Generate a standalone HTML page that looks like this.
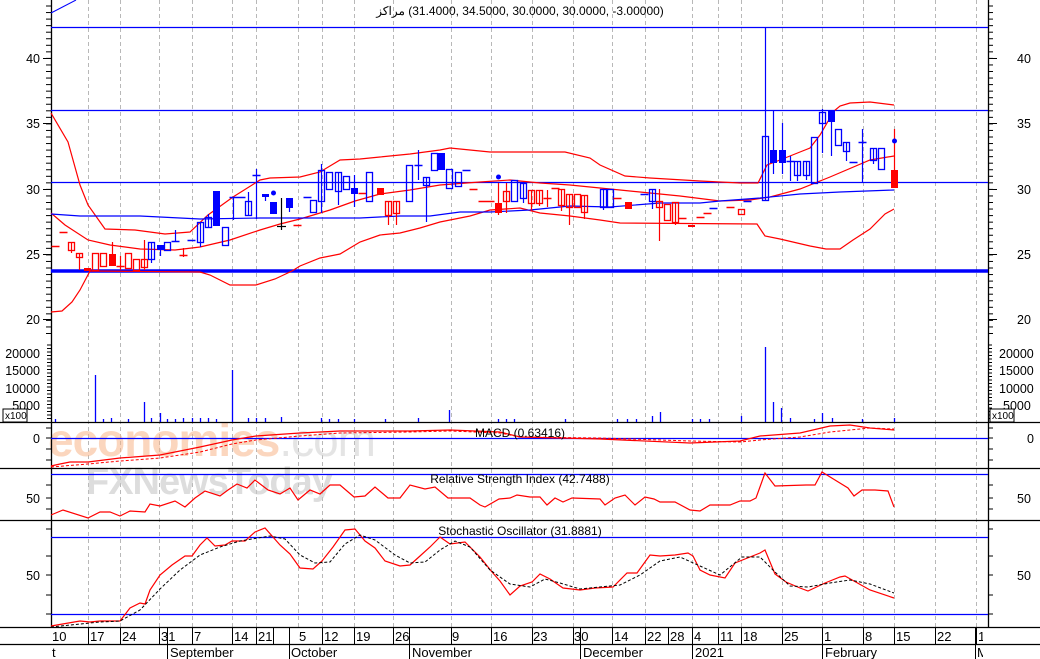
<!DOCTYPE html>
<html><head><meta charset="utf-8"><style>
html,body{margin:0;padding:0;background:#fff;}
body{width:1040px;height:659px;overflow:hidden;}
svg{display:block;font-family:"Liberation Sans","Noto Sans CJK SC",sans-serif;}
</style></head><body>
<svg id="s" width="1040" height="659" viewBox="0 0 1040 659" xmlns="http://www.w3.org/2000/svg">
<defs><clipPath id="cl"><rect x="0" y="0" width="983" height="659"/></clipPath></defs>
<g id="grid"></g>
<text x="48" y="456" font-size="46" fill="#f8b58a" opacity="0.55" font-weight="bold" letter-spacing="-1">economies<tspan fill="#cfcfcf" font-weight="normal">.com</tspan></text>
<text x="86" y="494" font-size="38" fill="#c8c8c8" opacity="0.6" font-weight="bold" letter-spacing="-1">FXNewsToday</text>
<g id="draw"></g>
<g font-size="12.5" fill="#000">
<text x="520" y="15" text-anchor="middle" font-size="12" direction="ltr" unicode-bidi="embed">&#x200E;مراكز&#x200E; (31.4000, 34.5000, 30.0000, 30.0000, -3.00000)</text>
<text x="40" y="63" text-anchor="end">40</text><text x="40" y="128" text-anchor="end">35</text><text x="40" y="194" text-anchor="end">30</text><text x="40" y="259" text-anchor="end">25</text><text x="40" y="324" text-anchor="end">20</text>
<text x="1017" y="63">40</text><text x="1017" y="128">35</text><text x="1017" y="194">30</text><text x="1017" y="259">25</text><text x="1017" y="324">20</text>
<text x="40" y="358" text-anchor="end">20000</text><text x="40" y="375" text-anchor="end">15000</text><text x="40" y="393" text-anchor="end">10000</text><text x="40" y="410" text-anchor="end">5000</text>
<text x="999" y="358">20000</text><text x="999" y="375">15000</text><text x="999" y="393">10000</text><text x="1003" y="410">5000</text>
<text x="40" y="443" text-anchor="end">0</text><text x="1027" y="443">0</text>
<text x="40" y="503" text-anchor="end">50</text><text x="1017" y="503">50</text>
<text x="40" y="580" text-anchor="end">50</text><text x="1017" y="580">50</text>
<text x="520" y="437" text-anchor="middle" font-size="12">MACD (0.63416)</text>
<text x="520" y="483" text-anchor="middle" font-size="12">Relative Strength Index (42.7488)</text>
<text x="520" y="535" text-anchor="middle" font-size="12">Stochastic Oscillator (31.8881)</text>
</g>
<g font-size="10" fill="#000"><rect x="3" y="409" width="24" height="13" fill="#fff" stroke="#000"/><text x="5" y="419">x100</text>
<rect x="990" y="409" width="24" height="13" fill="#fff" stroke="#000"/><text x="992" y="419">x100</text></g>
<g font-size="13" fill="#000" id="axl" clip-path="url(#cl)">
<text x="52" y="641">10</text><text x="90" y="641">17</text><text x="122" y="641">24</text><text x="161" y="641">31</text><text x="194" y="641">7</text><text x="234" y="641">14</text><text x="258" y="641">21</text><text x="299" y="641">5</text><text x="324" y="641">12</text><text x="356" y="641">19</text><text x="395" y="641">26</text><text x="452" y="641">9</text><text x="493" y="641">16</text><text x="533" y="641">23</text><text x="574" y="641">30</text><text x="614" y="641">14</text><text x="647" y="641">22</text><text x="670" y="641">28</text><text x="694" y="641">4</text><text x="720" y="641">11</text><text x="743" y="641">18</text><text x="784" y="641">25</text><text x="824" y="641">1</text><text x="865" y="641">8</text><text x="896" y="641">15</text><text x="937" y="641">22</text><text x="978" y="641">1</text>
<text x="52" y="657">t</text><text x="170" y="657">September</text><text x="291" y="657">October</text><text x="412" y="657">November</text><text x="583" y="657">December</text><text x="695" y="657">2021</text><text x="825" y="657">February</text><text x="977" y="657">Ma</text>
</g>
</svg>
<script>
var NS="http://www.w3.org/2000/svg",G=document.getElementById('grid'),D=document.getElementById('draw');
function el(p,t,a){var e=document.createElementNS(NS,t);for(var k in a)e.setAttribute(k,a[k]);p.appendChild(e);return e;}
function line(p,x1,y1,x2,y2,c,w,da){var a={x1:x1,y1:y1,x2:x2,y2:y2,stroke:c,'stroke-width':w||1};if(da)a['stroke-dasharray']=da;return el(p,'line',a);}
function pl(p,pts,c,w,da){var a={points:pts.map(function(q){return q.join(',')}).join(' '),fill:'none',stroke:c,'stroke-width':w||1};if(da)a['stroke-dasharray']=da;el(p,'polyline',a);}
var gx=[88,120,159,192,232,256,298,322,354,393,451,491,532,573,612,645,692,718,741,782,822,863,894,935,976];
gx.forEach(function(x){line(G,x+.5,0,x+.5,627,'#b8b8b8',1,'4,3');});
[422.5,468.5,520.5,627.5,644.5].forEach(function(y){line(D,0,y,1040,y,'#000',1.3);});
line(D,51.5,0,51.5,627,'#000',1.3);line(D,988.5,0,988.5,627,'#000',1.3);
for(var y=6;y<340;y+=6.55){line(D,46,y,51,y,'#000',1);line(D,988,y,993,y,'#000',1);}
[58,123,189,254,319].forEach(function(y){line(D,43,y+.5,51,y+.5,'#000',1);line(D,988,y+.5,997,y+.5,'#000',1);});
for(var y=345;y<422;y+=3.5){line(D,47,y,51,y,'#000',1);line(D,988,y,992,y,'#000',1);}
[428,438,449,460,485,498,509,529,556,575,595,614].forEach(function(y){line(D,46,y,51,y,'#000',1);line(D,988,y,993,y,'#000',1);});
[88,120,159,192,232,256,273,289,322,354,393,409,451,491,532,573,612,645,668,692,718,741,782,822,863,894,935,976].forEach(function(x){line(D,x+.5,627,x+.5,644,'#000',1);});
[167,289,409,580,692,822,975].forEach(function(x){line(D,x+.5,627,x+.5,659,'#000',1);});
var B='#0000ff',R='#ff0000';
line(D,51,27.5,988,27.5,B,1.2);line(D,51,110.5,988,110.5,B,1.2);line(D,51,182.5,988,182.5,B,1.2);line(D,51,271,988,271,B,3.5);
line(D,51,13,76,0,B,1);
line(D,51,438.5,988,438.5,B,1.2);line(D,51,474.5,988,474.5,B,1.2);line(D,51,537.5,988,537.5,B,1.2);line(D,51,614.5,988,614.5,B,1.2);
pl(D,[[51,113],[68,142],[80,185],[88,205],[105,229],[135,230],[165,234],[190,232],[208,215],[233,197],[260,180],[270,178],[300,177],[320,172],[340,160],[360,159],[380,157],[410,154],[440,150],[450,148],[490,152],[565,152],[590,158],[600,165],[625,176],[650,178],[700,181],[740,183],[758,183],[767,165],[780,160],[800,152],[810,148],[820,135],[834,111],[840,106],[850,103],[870,102],[894,105]],R,1.2);
pl(D,[[51,213],[65,225],[88,240],[110,245],[140,249],[175,250],[200,247],[230,240],[260,230],[280,224],[300,219],[330,210],[355,201],[380,194],[410,190],[440,185],[480,182],[510,180],[540,183],[570,185],[600,188],[620,190],[680,196],[720,201],[750,200],[770,197],[800,189],[830,177],[870,160],[894,156]],R,1.2);
pl(D,[[51,312],[62,311],[72,302],[80,290],[90,271],[200,272],[210,275],[230,285],[256,285],[275,279],[292,271],[300,266],[320,258],[340,254],[360,242],[380,235],[400,233],[420,228],[440,222],[470,216],[490,210],[520,208],[540,213],[570,216],[600,220],[620,223],[757,224],[765,236],[780,239],[810,246],[826,249],[840,249],[853,240],[870,229],[885,214],[894,209]],R,1.2);
pl(D,[[51,214],[80,216],[140,216],[200,219],[260,218],[360,218],[400,216],[430,216],[460,212],[490,212],[530,210],[570,206],[610,207],[660,203],[700,203],[720,201],[760,198],[800,194],[840,192],[894,190]],B,1.2);
var C=[[55,246,246,246,246,R,2],[63,232,232,232,232,R,2],[71,242,250,242,253,R,0],[79,253,257,253,270,R,0],[87,268,271,268,271,R,1],[95,253,270,253,270,R,0],[103,253,266,253,266,R,0],[112,254,266,242,266,R,1],[120,266,266,256,270,R,2],[128,253,268,253,268,R,0],[136,259,270,259,270,R,0],[144,259,267,240,270,R,0],
[151,242,259,242,263,B,0],[160,245,250,245,256,B,1],[167,242,250,242,250,B,0],[175,241,241,230,242,B,2],[183,255,255,248,257,R,2],[191,240,240,240,240,B,2],[200,222,242,222,247,B,0],[208,217,227,214,227,B,0],[216,191,226,191,226,B,1],[225,227,245,227,245,B,0],[233,197,197,197,220,B,2],[241,197,197,197,197,B,2],[248,201,215,192,215,B,0],[256,175,175,169,219,B,2],[265,194,197,194,201,B,1],[273,202,214,202,214,B,1],[289,198,208,198,212,B,1],[297,225,225,225,225,R,2],[307,197,197,197,197,B,2],[313,200,212,200,212,B,0],[321,170,201,164,213,B,0],[329,172,189,172,189,B,0],[338,172,191,172,205,B,0],[346,176,189,176,189,B,0],[354,188,194,175,207,B,1],[362,193,193,193,193,R,2],[369,172,201,172,201,B,0],[380,188,195,188,195,R,1],[388,201,215,201,225,R,0],[396,201,213,201,225,R,0],[409,165,201,165,201,B,0],[418,165,165,150,180,B,2],[426,177,185,177,222,B,0],[434,153,170,153,170,B,0],[441,153,170,153,170,B,1],[449,169,188,169,188,B,0],[458,172,186,172,186,B,0],[466,170,170,170,170,B,2],[473,189,189,189,189,R,2],[482,201,201,201,201,R,2],[490,201,201,201,201,R,2],[498,203,213,183,215,R,1],[506,191,201,183,213,R,0],[514,180,201,180,201,B,0],
[523,183,198,183,203,B,0],[531,190,203,190,211,R,0],[539,190,203,190,206,R,0],[547,198,198,190,207,R,2],[555,188,188,188,188,R,2],[561,189,205,189,211,R,0],[569,194,207,194,225,R,0],[577,194,207,194,207,R,0],[584,195,212,195,219,R,0],[603,189,207,189,210,B,0],[610,189,207,189,207,B,0],[617,198,198,198,198,R,2],[628,202,209,202,209,R,1],[644,194,194,194,194,B,2],[652,189,201,189,209,B,0],[659,201,207,189,241,R,0],[667,204,220,204,220,R,0],[675,202,222,202,225,R,0],[682,218,218,218,218,R,2],[691,225,226,225,226,R,1],[700,217,217,217,217,R,2],[707,213,213,213,213,R,2],[713,208,208,208,208,B,2],[730,207,207,207,207,R,2],[741,209,214,209,214,R,0],[747,201,201,201,201,B,2],
[765,136,200,27,200,B,0],[773,150,163,110,174,B,1],[782,150,163,123,174,B,1],[790,161,161,156,181,B,2],[797,161,175,161,181,B,0],[806,161,175,161,180,B,0],[814,137,183,137,183,B,0],[822,112,123,109,153,B,0],[831,110,122,110,156,B,1],[838,129,145,129,145,B,0],[846,142,151,142,161,B,0],[853,162,162,162,162,B,2],[862,142,142,129,182,B,2],[873,148,160,148,164,B,0],[881,148,169,148,169,B,0],[894,170,188,129,188,R,1]];
C.forEach(function(c){var x=c[0],col=c[5];
 if(c[3]<c[1]||c[4]>c[2])line(D,x+.5,c[3],x+.5,c[4],col,1.2);
 if(c[6]==2){line(D,x-3.5,c[1]+.5,x+4.5,c[1]+.5,col,1.5);}
 else if(c[6]==1){el(D,'rect',{x:x-3,y:c[1],width:7,height:Math.max(2,c[2]-c[1]),fill:col});}
 else{el(D,'rect',{x:x-2.5,y:c[1]+.5,width:6,height:c[2]-c[1],fill:'none',stroke:col,'stroke-width':1.3});}
});
line(D,281.5,198,281.5,230,'#000',1.2);line(D,277,226.5,286,226.5,'#000',1.2);
el(D,'circle',{cx:273.5,cy:193,r:2.5,fill:B});el(D,'circle',{cx:498.5,cy:177,r:2.5,fill:B});el(D,'circle',{cx:894.5,cy:141,r:2.5,fill:B});
var V=[[95,375],[144,402],[160,413],[232,370],[449,410],[765,347],[773,402],[781,408],[822,413],[55,419],[103,419],[111,418],[128,419],[151,418],[167,419],[175,419],[183,418],[192,418],[200,418],[208,418],[216,419],[248,418],[256,418],[265,418],[281,417],[321,418],[329,419],[338,419],[354,419],[385,419],[418,418],[498,419],[506,419],[514,419],[565,419],[617,419],[627,419],[636,419],[652,416],[660,412],[692,419],[700,419],[709,419],[741,416],[790,418],[814,419],[832,418],[862,419],[894,418]];
V.forEach(function(v){line(D,v[0]+.5,v[1],v[0]+.5,422,B,1.3);});
pl(D,[[51,466],[60,464],[70,462],[88,462],[120,458],[160,455],[200,447],[232,440],[256,436],[300,433],[340,431],[410,431],[450,430],[500,432],[520,437],[600,439],[690,443],[740,441],[760,436],[800,433],[830,426],[850,425],[870,428],[894,430]],R,1.2);
pl(D,[[51,467],[88,464],[120,461],[160,458],[200,452],[232,444],[256,440],[300,436],[340,433],[410,432],[450,431],[500,433],[520,437],[600,438],[690,441],[740,442],[760,440],[800,437],[830,432],[850,430],[870,428],[894,429]],R,1,'3,2');
pl(D,[[51,515],[63,510],[88,518],[100,512],[110,512],[120,516],[130,511],[145,512],[150,504],[160,506],[175,501],[185,507],[195,498],[205,491],[220,496],[228,490],[237,484],[247,488],[255,480],[268,490],[280,494],[290,488],[298,500],[310,490],[320,494],[330,485],[340,485],[354,497],[365,496],[375,487],[388,498],[400,498],[410,485],[425,489],[435,487],[448,498],[470,498],[480,505],[485,507],[499,499],[510,498],[517,495],[530,497],[540,497],[547,505],[555,498],[563,502],[572,498],[600,499],[605,505],[615,498],[625,495],[635,505],[645,497],[654,499],[660,502],[675,502],[690,510],[700,511],[710,505],[730,505],[740,501],[750,501],[756,498],[765,473],[775,486],[806,485],[815,485],[822,472],[835,480],[848,488],[854,496],[862,490],[875,490],[888,491],[894,507]],R,1.2);
pl(D,[[51,626],[80,621],[90,622],[100,621],[120,621],[130,608],[140,603],[145,604],[150,590],[160,575],[172,565],[185,556],[192,556],[200,545],[207,538],[215,546],[225,545],[232,541],[245,541],[255,532],[265,528],[280,545],[290,554],[300,568],[313,569],[322,561],[333,547],[345,530],[355,529],[365,541],[375,548],[385,561],[400,566],[410,565],[420,556],[430,547],[440,537],[450,544],[465,542],[480,557],[492,572],[500,581],[510,595],[520,586],[532,582],[540,574],[550,579],[563,588],[580,590],[595,588],[613,587],[627,573],[637,573],[650,555],[660,556],[675,555],[688,553],[693,556],[700,570],[710,575],[725,578],[735,563],[750,557],[760,553],[765,550],[775,574],[786,582],[800,588],[808,591],[825,583],[840,577],[845,576],[870,590],[894,598]],R,1.2);
pl(D,[[51,627],[100,622],[120,621],[140,610],[160,589],[180,570],[200,555],[220,547],[240,541],[270,536],[285,539],[300,555],[315,563],[330,562],[345,544],[360,535],[375,540],[395,555],[410,563],[425,562],[440,550],[455,541],[470,547],[490,570],[510,584],[530,587],[545,579],[560,583],[580,589],[600,587],[620,585],[640,575],[660,561],[680,557],[700,566],[720,575],[742,557],[760,557],[775,572],[790,586],[808,587],[830,583],[850,580],[870,584],[894,593]],'#000',1,'3,2');
</script>
</body></html>
